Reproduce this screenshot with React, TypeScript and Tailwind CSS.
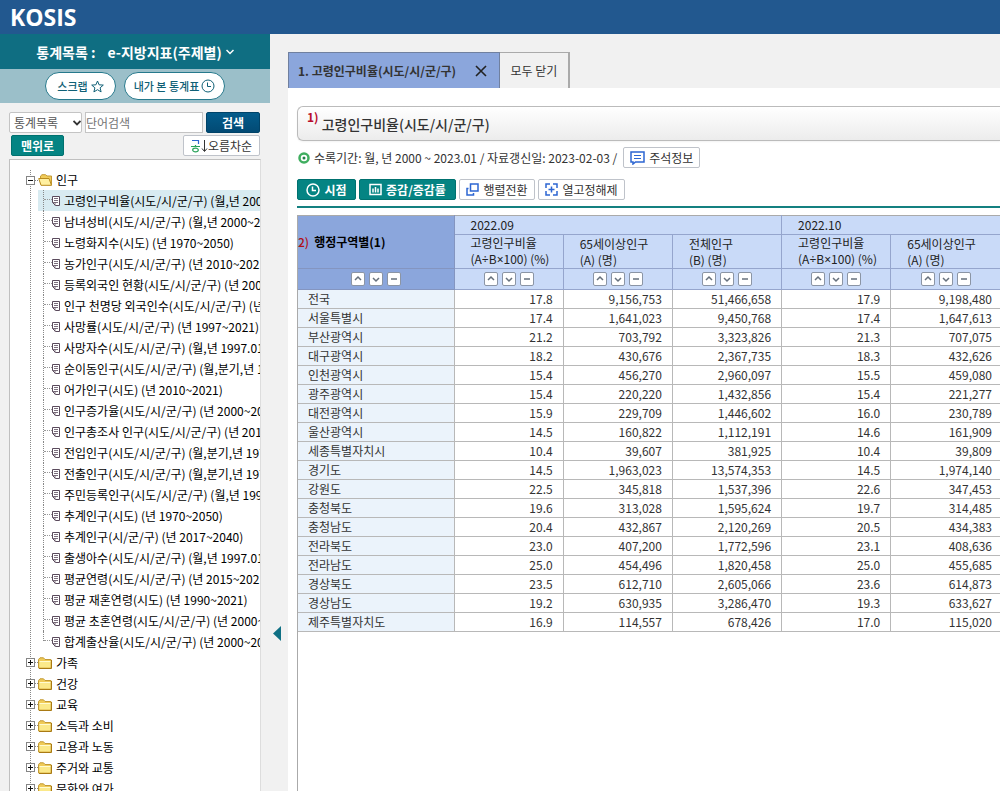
import clsx from 'clsx';
import type { ReactNode } from 'react';

const childItems = [
	'고령인구비율(시도/시/군/구) (월,년 200',
	'남녀성비(시도/시/군/구) (월,년 2000~2',
	'노령화지수(시도) (년 1970~2050)',
	'농가인구(시도/시/군/구) (년 2010~202',
	'등록외국인 현황(시도/시/군/구) (년 200',
	'인구 천명당 외국인수(시도/시/군/구) (년',
	'사망률(시도/시/군/구) (년 1997~2021)',
	'사망자수(시도/시/군/구) (월,년 1997.01',
	'순이동인구(시도/시/군/구) (월,분기,년 1',
	'어가인구(시도) (년 2010~2021)',
	'인구증가율(시도/시/군/구) (년 2000~20',
	'인구총조사 인구(시도/시/군/구) (년 201',
	'전입인구(시도/시/군/구) (월,분기,년 197',
	'전출인구(시도/시/군/구) (월,분기,년 197',
	'주민등록인구(시도/시/군/구) (월,년 199',
	'추계인구(시도) (년 1970~2050)',
	'추계인구(시/군/구) (년 2017~2040)',
	'출생아수(시도/시/군/구) (월,년 1997.01',
	'평균연령(시도/시/군/구) (년 2015~202',
	'평균 재혼연령(시도) (년 1990~2021)',
	'평균 초혼연령(시도/시/군/구) (년 2000~',
	'합계출산율(시도/시/군/구) (년 2000~20'
];

const categories = [
	'가족',
	'건강',
	'교육',
	'소득과 소비',
	'고용과 노동',
	'주거와 교통',
	'문화와 여가'
];

// The Korean font draws the operators full width, so they take a Latin one
const ratioUnit = (
	<>
		(A<span className="font-['Noto_Sans',sans-serif]">÷</span>B
		<span className="font-['Noto_Sans',sans-serif]">×</span>100) (%)
	</>
);

const columns: [string, ReactNode][] = [
	['고령인구비율', ratioUnit],
	['65세이상인구', '(A) (명)'],
	['전체인구', '(B) (명)'],
	['고령인구비율', ratioUnit],
	['65세이상인구', '(A) (명)']
];

const rows = [
	['전국', '17.8', '9,156,753', '51,466,658', '17.9', '9,198,480'],
	['서울특별시', '17.4', '1,641,023', '9,450,768', '17.4', '1,647,613'],
	['부산광역시', '21.2', '703,792', '3,323,826', '21.3', '707,075'],
	['대구광역시', '18.2', '430,676', '2,367,735', '18.3', '432,626'],
	['인천광역시', '15.4', '456,270', '2,960,097', '15.5', '459,080'],
	['광주광역시', '15.4', '220,220', '1,432,856', '15.4', '221,277'],
	['대전광역시', '15.9', '229,709', '1,446,602', '16.0', '230,789'],
	['울산광역시', '14.5', '160,822', '1,112,191', '14.6', '161,909'],
	['세종특별자치시', '10.4', '39,607', '381,925', '10.4', '39,809'],
	['경기도', '14.5', '1,963,023', '13,574,353', '14.5', '1,974,140'],
	['강원도', '22.5', '345,818', '1,537,396', '22.6', '347,453'],
	['충청북도', '19.6', '313,028', '1,595,624', '19.7', '314,485'],
	['충청남도', '20.4', '432,867', '2,120,269', '20.5', '434,383'],
	['전라북도', '23.0', '407,200', '1,772,596', '23.1', '408,636'],
	['전라남도', '25.0', '454,496', '1,820,458', '25.0', '455,685'],
	['경상북도', '23.5', '612,710', '2,605,066', '23.6', '614,873'],
	['경상남도', '19.2', '630,935', '3,286,470', '19.3', '633,627'],
	['제주특별자치도', '16.9', '114,557', '678,426', '17.0', '115,020']
];

const ClockIcon = (props: { className: string }) => (
	<svg
		viewBox="0 0 14 14"
		fill="none"
		stroke="currentColor"
		className={props.className}
	>
		<circle cx="7" cy="7" r="6" />
		<path d="M6.5 3.5v4H10" />
	</svg>
);

const FolderIcon = (props: { open?: boolean }) => (
	<svg viewBox="0 0 15 12" className="h-3 w-[15px] shrink-0">
		{props.open ? (
			<>
				<path d="M2.500 10V2L4 .7h3.500L9 2h4.500v9z" fill="#f0cb58" stroke="#c39a35" />
				<path d="M.7 4.500h10.300l2.500 6.800H3z" fill="#fff0a0" stroke="#b98a1d" />
			</>
		) : (
			<>
				<path
					d="M.5 11V2.500L2 .8h3.500L7 2.500h6v8.700z"
					fill="#f0cb58"
					stroke="#c39a35"
				/>
				<path d="M1.500 4.500h11v6h-11z" fill="#fbe98a" />
				<path d="M1.500 4.500h11" stroke="#fffbd0" />
				<path d="M1 11.500h12.500V3" fill="none" stroke="#a97a14" />
			</>
		)}
	</svg>
);

const ToggleIcon = (props: { open?: boolean }) => (
	<svg
		viewBox="0 0 9 9"
		shapeRendering="crispEdges"
		className="h-[9px] w-[9px] shrink-0"
	>
		<path d="M.5.5h8v8h-8z" fill="#fff" stroke="#858585" />
		<path d={props.open ? 'M2 4.5h5' : 'M2 4.5h5M4.5 2v5'} stroke="#111" />
	</svg>
);

const DocIcon = () => (
	<svg
		viewBox="0 0 8 10"
		fill="none"
		stroke="#5a4a5c"
		className="h-[10px] w-2 shrink-0"
	>
		<path d="M.5 .5h7v9H3.5L.5 6.5z" fill="#fff" />
		<path d="M2 2.5h4M2 4.5h4M3 6.5h3M.5 6.5h2.5v3" strokeWidth=".8" />
	</svg>
);

const sortPaths = ['M4 8l3-3 3 3', 'M4 6l3 3 3-3', 'M4 7h6'];
const sortLabels = ['오름차순 정렬', '내림차순 정렬', '정렬 해제'];

const SortButtons = () => (
	<div className="flex justify-center gap-1">
		{sortPaths.map((d, i) => (
			<button
				key={d}
				type="button"
				aria-label={sortLabels[i]}
				className="h-[14px] w-[14px] rounded-xs border border-[#8b95a5] bg-white"
			>
				<svg
					viewBox="1 1 12 12"
					fill="none"
					stroke="#66707c"
					strokeWidth="1.5"
					className="h-3 w-3"
				>
					<path d={d} />
				</svg>
			</button>
		))}
	</div>
);

type ToolButtonProps = {
	primary?: boolean;
	className?: string;
	children: ReactNode;
};

const ToolButton = (props: ToolButtonProps) => (
	<button
		type="button"
		className={clsx(
			'flex h-[21px] items-center justify-center gap-1 rounded-xs border',
			props.primary
				? 'border-[#00716f] bg-[#048483] font-bold text-white'
				: 'border-[#bfc3ca] bg-white text-[#333]',
			props.className
		)}
	>
		{props.children}
	</button>
);

const Sidebar = () => (
	<aside className="flex w-[270px] shrink-0 flex-col">
		<button
			type="button"
			className="flex h-[35px] shrink-0 items-center justify-center bg-[#0f6e82] text-sm font-bold text-white"
		>
			통계목록 :<span className="ml-3">e-지방지표(주제별)</span>
			<svg
				viewBox="0 0 8 6"
				fill="none"
				stroke="currentColor"
				strokeWidth="1.5"
				className="ml-1 h-[6px] w-2"
			>
				<path d="M.5 1L4 4.500 7.500 1" />
			</svg>
		</button>
		<div className="flex h-[34px] shrink-0 items-center justify-center gap-2 bg-[#9bbfc9] text-[11px] font-medium text-[#0f6076]">
			<button
				type="button"
				className="flex h-7 w-[71px] items-center justify-center gap-[3px] rounded-full border border-[#26798c] bg-white"
			>
				스크랩
				<svg
					viewBox="0 0 13 13"
					fill="none"
					stroke="currentColor"
					className="h-[13px] w-[13px]"
				>
					<path d="M6.500 1l1.600 3.800 4.200.3-3.200 2.700 1 4.100-3.600-2.200-3.600 2.200 1-4.100L.7 5.100l4.200-.3z" />
				</svg>
			</button>
			<button
				type="button"
				className="flex h-7 w-[101px] items-center justify-center gap-[2px] rounded-full border border-[#26798c] bg-white"
			>
				내가 본 통계표
				<ClockIcon className="h-[14px] w-[14px]" />
			</button>
		</div>

		<form
			className="mt-[9px] flex h-[21px] shrink-0 gap-[3px] pr-[10px] pl-[9px]"
			onSubmit={e => e.preventDefault()}
		>
			<div className="relative w-[73px] shrink-0">
				<select
					aria-label="검색 대상"
					className="h-full w-full appearance-none rounded-xs border border-[#c4c4c4] bg-white pl-1 text-[#555]"
				>
					<option>통계목록</option>
				</select>
				<svg
					viewBox="0 0 8 6"
					fill="none"
					stroke="#333"
					strokeWidth="1.800"
					className="pointer-events-none absolute top-2 right-[1px] h-[6px] w-2"
				>
					<path d="M.5 1L4 4.500 7.500 1" />
				</svg>
			</div>
			<input
				type="text"
				aria-label="단어검색"
				placeholder="단어검색"
				className="min-w-0 flex-1 border border-[#c4c4c4] bg-white placeholder:text-[#757575]"
			/>
			<button
				type="submit"
				className="w-[54px] rounded-xs border border-[#004368] bg-linear-to-b from-[#035c8b] to-[#024a74] font-bold text-white"
			>
				검색
			</button>
		</form>

		<div className="mt-[2px] flex shrink-0 justify-between pr-[10px] pl-[11px]">
			<ToolButton primary className="w-[53px]">
				맨위로
			</ToolButton>
			<button
				type="button"
				className="flex h-[21px] w-[77px] items-center justify-center rounded-xs border border-[#bfc3ca] bg-white text-[#333]"
			>
				<svg viewBox="0 0 17 14" fill="none" className="h-[14px] w-[17px]">
					<path d="M1 1.500h6.500v3.500" stroke="#2f66d0" strokeWidth="1.200" />
					<path d="M0 7.500h9M4.500 6v2" stroke="#2aa35a" strokeWidth="1.200" />
					<ellipse cx="4.500" cy="11" rx="2.800" ry="1.800" stroke="#2aa35a" strokeWidth="1.200" />
					<path d="M13.500 1v11M11 9.500l2.500 3 2.500-3" stroke="#333" />
				</svg>
				오름차순
			</button>
		</div>

		<nav className="mt-[3px] mr-[9px] ml-[9px] min-h-0 flex-1 overflow-hidden border border-b-0 border-[#c0c0c0] border-r-[#ddd] bg-white pt-[10px] whitespace-nowrap text-black">
			<div className="ml-5 border-l border-dotted border-[#888]">
				<div className="-ml-[5px] flex h-5 items-center">
					<ToggleIcon open />
					<span className="w-[3px] border-t border-dotted border-[#888]" />
					<FolderIcon open />
					<span className="ml-[3px]">인구</span>
				</div>
				<ul className="ml-[7px]">
					{childItems.map((item, i) => (
						<li
							key={item}
							className={clsx(
								'flex h-[21px] pl-[5px]',
								i === 0 && 'bg-[#d8ebf1]'
							)}
						>
							<span
								className={clsx(
									'shrink-0 border-l border-dotted border-[#888]',
									i === childItems.length - 1 && 'h-[10px]'
								)}
							/>
							<span className="mt-[9px] w-2 shrink-0 border-t border-dotted border-[#999]" />
							<a href="#" className="flex items-center gap-1">
								<DocIcon />
								{item}
							</a>
						</li>
					))}
				</ul>
				{categories.map(category => (
					<div key={category} className="-ml-[5px] flex h-[21px] items-center">
						<ToggleIcon />
						<span className="w-[3px] border-t border-dotted border-[#888]" />
						<FolderIcon />
						<span className="ml-[3px]">{category}</span>
					</div>
				))}
			</div>
		</nav>
	</aside>
);

const StatsTable = () => (
	<table className="w-full table-fixed border-collapse text-left text-[#333]">
		<colgroup>
			<col className="w-[156px]" />
			<col />
			<col />
			<col />
			<col />
			<col />
		</colgroup>
		<thead className="bg-[#c9daf8] text-[#222]">
			<tr className="h-[19px]">
				<th
					rowSpan={2}
					className="border border-l-0 border-[#8495c0] border-t-[#aaa] bg-[#8ba6dc] text-black"
				>
					<span className="mr-[5px] font-medium text-[#b01116]">2)</span>
					행정구역별(1)
				</th>
				<th
					colSpan={3}
					className="border border-[#95a5cd] border-t-[#aaa] pl-4 leading-[18px] font-normal"
				>
					2022.09
				</th>
				<th
					colSpan={2}
					className="border border-r-0 border-[#95a5cd] border-t-[#aaa] pl-4 leading-[18px] font-normal"
				>
					2022.10
				</th>
			</tr>
			<tr className="h-[34px]">
				{columns.map(([name, unit], i) => (
					<th
						key={i}
						className="border border-[#95a5cd] pl-4 leading-4 font-normal whitespace-nowrap last:border-r-0"
					>
						{name}
						<br />
						{unit}
					</th>
				))}
			</tr>
			<tr className="h-[21px]">
				<td className="border border-l-0 border-[#8495c0] bg-[#8ba6dc]">
					<SortButtons />
				</td>
				{columns.map((_, i) => (
					<td key={i} className="border border-[#95a5cd] last:border-r-0">
						<SortButtons />
					</td>
				))}
			</tr>
		</thead>
		<tbody>
			{rows.map(([region, ...values]) => (
				<tr key={region} className="h-[19px] leading-[18px]">
					<th className="border border-l-0 border-[#b8b8b8] bg-[#ebf3fb] pl-[10px] font-normal">
						{region}
					</th>
					{values.map((value, i) => (
						<td
							key={i}
							className="border border-[#b8b8b8] pr-[10px] text-right last:border-r-0 last:pr-2"
						>
							{value}
						</td>
					))}
				</tr>
			))}
		</tbody>
	</table>
);

const Content = () => (
	<main className="flex min-w-0 flex-1 flex-col pt-[18px]">
		<div className="flex h-9 shrink-0">
			<div className="flex w-[212px] items-center justify-between border border-b-0 border-[#70809f] bg-[#8ba6dc] pr-3 pl-[9px] font-bold text-[#333]">
				1. 고령인구비율(시도/시/군/구)
				<button type="button" aria-label="닫기">
					<svg
						viewBox="0 0 12 12"
						fill="none"
						stroke="#222"
						strokeWidth="1.600"
						className="h-3 w-3"
					>
						<path d="M1 1l10 10M11 1L1 11" />
					</svg>
				</button>
			</div>
			<button
				type="button"
				className="w-[70px] border-t border-r-2 border-[#aaa] text-[#333]"
			>
				모두 닫기
			</button>
		</div>

		<div className="flex min-h-0 flex-1 flex-col bg-white pt-[18px] pl-[9px]">
			<h1 className="flex h-[35px] shrink-0 items-center rounded-l-md border border-r-0 border-[#bbb] bg-linear-to-b from-white to-[#ececec] pl-[9px] text-sm font-medium text-[#333] shadow-xs">
				<span className="mr-[3px] self-start text-xs leading-5 font-bold text-[#b80d2c]">
					1)
				</span>
				고령인구비율(시도/시/군/구)
			</h1>

			<div className="mt-[6px] flex h-[21px] shrink-0 items-center text-[#333]">
				<svg viewBox="0 0 12 12" className="mr-1 ml-px h-3 w-3">
					<circle cx="6" cy="6" r="4.500" fill="#fff" stroke="#3fae5f" strokeWidth="2.500" />
					<circle cx="6" cy="6" r="1.500" fill="#23804a" />
				</svg>
				<p className="mr-[6px]">
					수록기간: 월, 년 2000 ~ 2023.01 / 자료갱신일: 2023-02-03 /
				</p>
				<ToolButton className="w-[77px]">
					<svg
						viewBox="0 0 15 14"
						fill="none"
						stroke="#2d66d2"
						strokeWidth="1.500"
						className="h-[14px] w-[15px]"
					>
						<path d="M1 1h13v10H5.500L3 13v-2H1z" />
						<path d="M4 4.500h7M4 7.500h7" strokeWidth="1.200" />
					</svg>
					주석정보
				</ToolButton>
			</div>

			<div className="mt-[11px] flex shrink-0 gap-[3px] border-b-2 border-[#148080] pb-[6px]">
				<ToolButton primary className="w-[59px]">
					<ClockIcon className="h-[14px] w-[14px] stroke-[1.500]" />
					시점
				</ToolButton>
				<ToolButton primary className="w-[97px]">
					<svg
						viewBox="0 0 13 13"
						fill="none"
						stroke="currentColor"
						strokeWidth="1.500"
						className="h-[13px] w-[13px]"
					>
						<path d="M1 1.500h11v10H1zM4 5.500v4M6.500 4v5.500M9 5.500v4" />
					</svg>
					증감/증감률
				</ToolButton>
				<ToolButton className="w-[76px]">
					<svg
						viewBox="0 0 13 13"
						fill="none"
						stroke="#2d66d2"
						strokeWidth="1.500"
						className="h-[13px] w-[13px]"
					>
						<path d="M4.500 1h7.500v7H4.500zM2.500 5.500H1v6.500h6.500v-2" />
					</svg>
					행렬전환
				</ToolButton>
				<ToolButton className="w-[87px]">
					<svg
						viewBox="0 0 13 13"
						fill="none"
						stroke="#2d66d2"
						strokeWidth="1.500"
						className="h-[13px] w-[13px]"
					>
						<path d="M1 5V1h4M8 1h4v4M12 8v4H8M5 12H1V8M6.500 3.500v6M3.500 6.500h6" />
					</svg>
					열고정해제
				</ToolButton>
			</div>

			<div className="mt-[7px] min-h-0 flex-1 overflow-hidden border-l border-[#aaa]">
				<StatsTable />
			</div>
		</div>
	</main>
);

const App = () => (
	<div className="flex h-screen flex-col overflow-hidden bg-[#f1f1f1] font-['Noto_Sans_CJK_KR','Noto_Sans',sans-serif] text-xs">
		<header className="flex h-[34px] shrink-0 items-center bg-[#22588f] pl-[10px] font-['Open_Sans','Noto_Sans',sans-serif] text-[23px] font-bold text-white">
			KOSIS
		</header>
		<div className="flex min-h-0 flex-1">
			<Sidebar />
			<div className="w-[18px] shrink-0 pt-[592px] pl-[3px]">
				<button type="button" aria-label="목록 접기" className="block">
					<svg viewBox="0 0 8 15" className="h-[15px] w-2">
						<path d="M8 0v15L0 7.500z" fill="#0f7084" />
					</svg>
				</button>
			</div>
			<Content />
		</div>
	</div>
);

export default App;
